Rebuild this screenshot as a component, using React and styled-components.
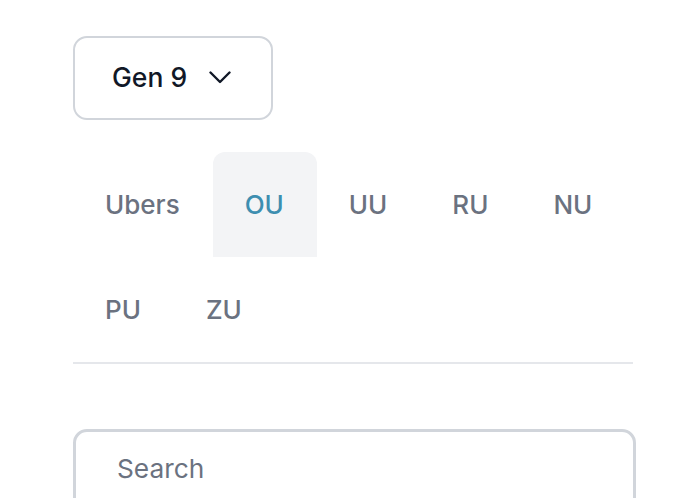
import React from "react";
import styled, { createGlobalStyle } from "styled-components";

const Global = createGlobalStyle`
  html, body { margin: 0; padding: 0; background: #ffffff; }
  body { font-family: Inter, "Noto Sans", Roboto, sans-serif; }
  * { box-sizing: border-box; }
`;

const Page = styled.div`
  padding: 36px 0 0 73px;
  width: 688px;
  height: 498px;
  overflow: hidden;
`;

const Select = styled.button`
  display: flex;
  align-items: center;
  gap: 22px;
  width: 200px;
  height: 84px;
  padding: 0 0 2px 37px;
  border: 2px solid #d1d5db;
  border-radius: 14px;
  background: #fff;
  font-family: inherit;
  font-size: 26.5px;
  font-weight: 500;
  color: #111827;
`;

const Tabs = styled.div`
  display: flex;
  flex-wrap: wrap;
  width: 560px;
  margin-top: 32px;
  border-bottom: 2px solid #e5e7eb;
`;

const Tab = styled.div`
  display: flex;
  align-items: center;
  height: 105px;
  padding: 0 33px 0 32px;
  font-size: 26px;
  font-weight: 500;
  color: ${(p) => (p.$active ? "#3d8eb0" : "#6b7280")};
  background: ${(p) => (p.$active ? "#f3f4f6" : "transparent")};
  border-radius: 12px 12px 0 0;
`;

const Search = styled.input`
  display: block;
  margin-top: 65px;
  width: 563px;
  height: 84px;
  padding: 0 0 6px 41px;
  border: 3px solid #d1d5db;
  border-radius: 14px;
  font-family: inherit;
  font-size: 26.3px;
  color: #111827;
  outline: none;
  &::placeholder { color: #6b7280; }
`;

const tiers = ["Ubers", "OU", "UU", "RU", "NU", "PU", "ZU"];

export default function App() {
  return (
    <>
      <Global />
      <Page>
        <Select>
          Gen 9
          <svg width="22" height="13" viewBox="0 0 22 13" fill="none">
            <path d="M1.5 1.5 L11 11 L20.5 1.5" stroke="#111827" strokeWidth="2.4" strokeLinecap="round" strokeLinejoin="round" />
          </svg>
        </Select>
        <Tabs>
          {tiers.map((t) => (
            <Tab key={t} $active={t === "OU"}>{t}</Tab>
          ))}
        </Tabs>
        <Search placeholder="Search" />
      </Page>
    </>
  );
}
